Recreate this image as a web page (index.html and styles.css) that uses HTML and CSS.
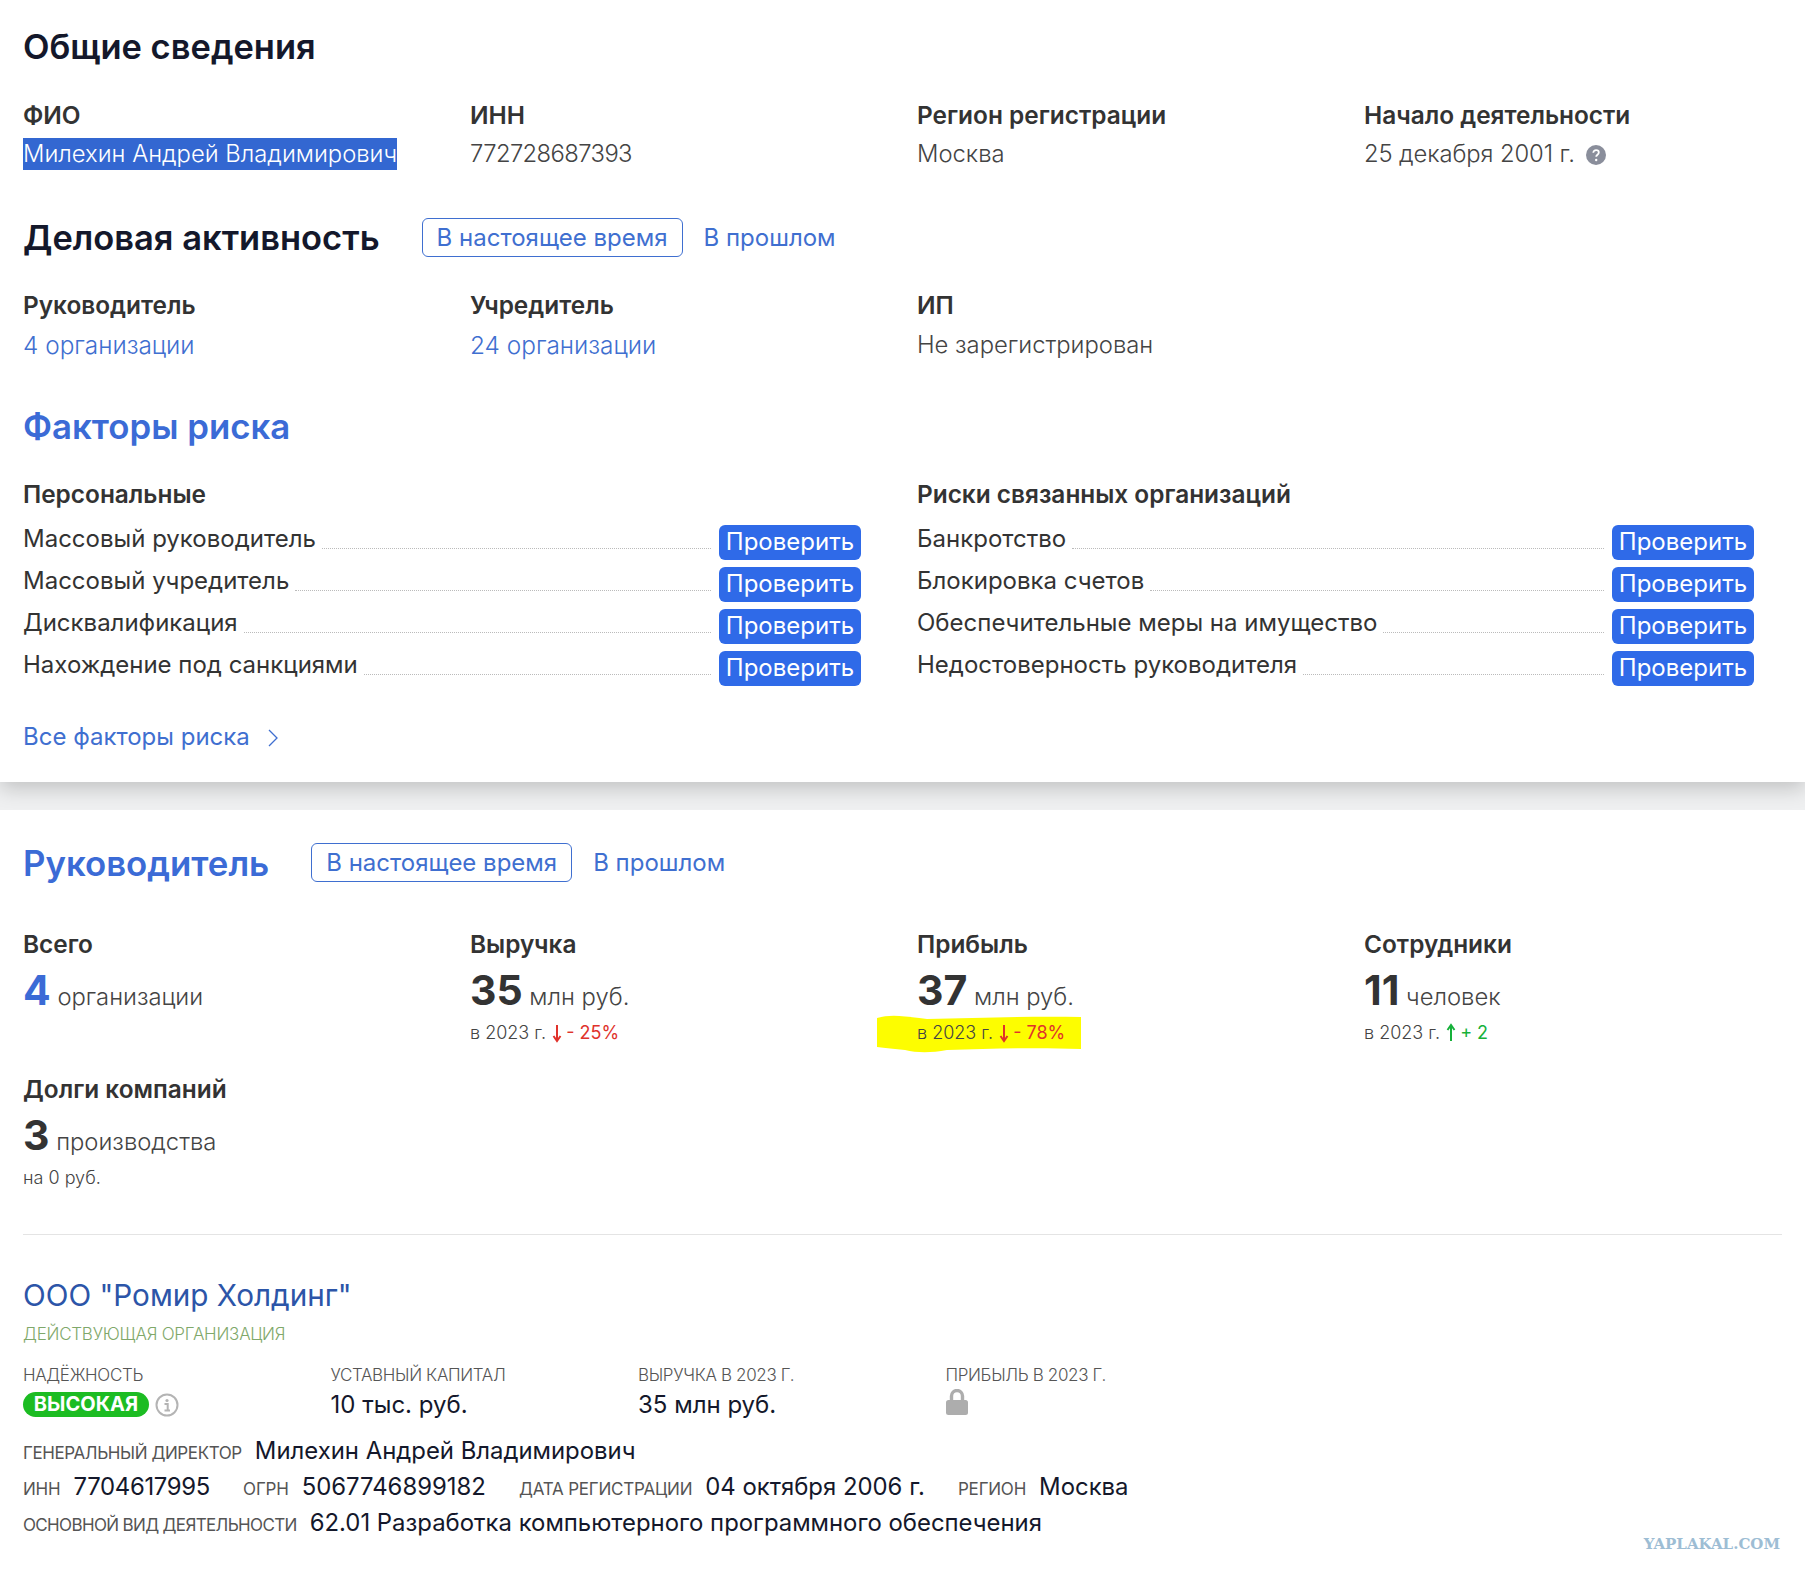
FILE: index.html
```html
<!DOCTYPE html>
<html lang="ru">
<head>
    <meta charset="UTF-8">
    <title>Милехин Андрей Владимирович</title>
    <link rel="stylesheet" href="styles.css">
</head>
<body>
    <section class="card card-top">
        <h2 class="title">Общие сведения</h2>
        <div class="info-grid first">
            <div><div class="label">ФИО</div><div class="value"><span class="selected">Милехин Андрей Владимирович</span></div></div>
            <div><div class="label">ИНН</div><div class="value digits">772728687393</div></div>
            <div><div class="label">Регион регистрации</div><div class="value">Москва</div></div>
            <div>
                <div class="label">Начало деятельности</div>
                <div class="value date">25 декабря 2001 г.
                    <svg class="help" width="20" height="20" viewBox="0 0 20 20"><circle cx="10" cy="10" r="10" fill="#8a8e9b"/><path d="M7.3 7.8c0-1.6 1.2-2.6 2.8-2.6s2.7 1 2.7 2.3c0 2.2-2.6 2.2-2.6 4.2" fill="none" stroke="#fff" stroke-width="1.8"/><circle cx="10.2" cy="15" r="1.2" fill="#fff"/></svg>
                </div>
            </div>
        </div>

        <div class="head-row activity">
            <h2 class="title">Деловая активность</h2>
            <a class="tab active">В настоящее время</a>
            <a class="tab">В прошлом</a>
        </div>
        <div class="info-grid second">
            <div><div class="label">Руководитель</div><div class="value link">4 организации</div></div>
            <div><div class="label">Учредитель</div><div class="value link">24 организации</div></div>
            <div><div class="label">ИП</div><div class="value">Не зарегистрирован</div></div>
        </div>

        <h2 class="title blue risk-title">Факторы риска</h2>
        <div class="risk-grid">
            <div>
                <div class="label">Персональные</div>
                <div class="risk-list">
                    <div class="risk-row"><span>Массовый руководитель</span><i></i><a class="check">Проверить</a></div>
                    <div class="risk-row"><span>Массовый учредитель</span><i></i><a class="check">Проверить</a></div>
                    <div class="risk-row"><span>Дисквалификация</span><i></i><a class="check">Проверить</a></div>
                    <div class="risk-row"><span>Нахождение под санкциями</span><i></i><a class="check">Проверить</a></div>
                </div>
            </div>
            <div>
                <div class="label">Риски связанных организаций</div>
                <div class="risk-list">
                    <div class="risk-row"><span>Банкротство</span><i></i><a class="check">Проверить</a></div>
                    <div class="risk-row"><span>Блокировка счетов</span><i></i><a class="check">Проверить</a></div>
                    <div class="risk-row"><span>Обеспечительные меры на имущество</span><i></i><a class="check">Проверить</a></div>
                    <div class="risk-row"><span>Недостоверность руководителя</span><i></i><a class="check">Проверить</a></div>
                </div>
            </div>
        </div>
        <a class="all-risks">Все факторы риска
            <svg width="12" height="20" viewBox="0 0 12 20"><path d="M2 2l8 8-8 8" fill="none" stroke="#3f6fd0" stroke-width="1.3"/></svg>
        </a>
    </section>

    <section class="card card-bottom">
        <div class="head-row">
            <h2 class="title blue">Руководитель</h2>
            <a class="tab active">В настоящее время</a>
            <a class="tab">В прошлом</a>
        </div>

        <div class="stat-grid">
            <div>
                <div class="label">Всего</div>
                <div class="stat"><b class="blue">4</b> организации</div>
            </div>
            <div>
                <div class="label">Выручка</div>
                <div class="stat"><b>35</b> млн руб.</div>
                <div class="sub">в 2023 г. <svg class="arrow" width="10" height="20" viewBox="0 0 10 20"><path d="M5 2v15M1.5 13L5 18l3.5-5" fill="none" stroke="#e0322b" stroke-width="2"/></svg> <em class="down">- 25%</em></div>
            </div>
            <div>
                <div class="label">Прибыль</div>
                <div class="stat"><b>37</b> млн руб.</div>
                <div class="sub marked">
                    <svg class="marker" width="204" height="40" viewBox="0 0 204 40"><path d="M0 5C14 1 26 3 50 6c50-1 100-3 154-2v32c-50-2-90 0-134 1-16 3-30 3-42 0-10-1-20-2-28-3z" fill="#fdfd00"/></svg>
                    в 2023 г. <svg class="arrow" width="10" height="20" viewBox="0 0 10 20"><path d="M5 2v15M1.5 13L5 18l3.5-5" fill="none" stroke="#e0322b" stroke-width="2"/></svg> <em class="down">- 78%</em>
                </div>
            </div>
            <div>
                <div class="label">Сотрудники</div>
                <div class="stat"><b>11</b> человек</div>
                <div class="sub">в 2023 г. <svg class="arrow" width="10" height="20" viewBox="0 0 10 20"><path d="M5 18V3M1.5 7L5 2l3.5 5" fill="none" stroke="#16b13a" stroke-width="2"/></svg> <em class="up">+ 2</em></div>
            </div>
            <div>
                <div class="label">Долги компаний</div>
                <div class="stat"><b>3</b> производства</div>
                <div class="sub">на 0 руб.</div>
            </div>
        </div>

        <hr class="divider">

        <a class="company-name">ООО "Ромир Холдинг"</a>
        <div class="company-status">ДЕЙСТВУЮЩАЯ ОРГАНИЗАЦИЯ</div>

        <div class="company-grid">
            <div>
                <div class="caption">НАДЁЖНОСТЬ</div>
                <div class="company-value">
                    <span class="badge">ВЫСОКАЯ</span>
                    <svg class="info" width="24" height="24" viewBox="0 0 24 24"><circle cx="12" cy="12" r="10.5" fill="none" stroke="#b4b4b4" stroke-width="2"/><circle cx="12" cy="7.5" r="1.6" fill="#b4b4b4"/><path d="M9.5 11h3.2v6M9.5 17.5h5.5" fill="none" stroke="#b4b4b4" stroke-width="2"/></svg>
                </div>
            </div>
            <div><div class="caption">УСТАВНЫЙ КАПИТАЛ</div><div class="company-value">10 тыс. руб.</div></div>
            <div><div class="caption">ВЫРУЧКА В 2023 Г.</div><div class="company-value">35 млн руб.</div></div>
            <div>
                <div class="caption">ПРИБЫЛЬ В 2023 Г.</div>
                <div class="company-value lock">
                    <svg width="22" height="26" viewBox="0 0 22 26"><path d="M5.5 13V7a5.5 5.5 0 0 1 11 0v6" fill="none" stroke="#adadad" stroke-width="3.4"/><rect y="11" width="22" height="15" rx="2.5" fill="#adadad"/></svg>
                </div>
            </div>
        </div>

        <div class="line"><span class="caption">ГЕНЕРАЛЬНЫЙ ДИРЕКТОР</span><span>Милехин Андрей Владимирович</span></div>
        <div class="line spaced">
            <span class="pair"><span class="caption">ИНН</span><span class="inn">7704617995</span></span>
            <span class="pair"><span class="caption">ОГРН</span><span>5067746899182</span></span>
            <span class="pair"><span class="caption">ДАТА РЕГИСТРАЦИИ</span><span>04 октября 2006 г.</span></span>
            <span class="pair"><span class="caption">РЕГИОН</span><span>Москва</span></span>
        </div>
        <div class="line"><span class="caption tight">ОСНОВНОЙ ВИД ДЕЯТЕЛЬНОСТИ</span><span>62.01 Разработка компьютерного программного обеспечения</span></div>
    </section>

    <div class="watermark">YAPLAKAL.COM</div>
</body>
</html>
```

FILE: styles.css
```css
body {
    margin: 0;
    height: 1573px;
    position: relative;
    overflow: hidden;
    background: #eff0f1;
    color: #333;
    font-family: "Inter", "Noto Sans", sans-serif;
    font-size: 24px;
    font-weight: 300;
}

.card {
    background: #fff;
    padding: 0 23px;
}

.card-top {
    position: relative;
    height: 782px;
    box-sizing: border-box;
    padding-top: 27px;
    box-shadow: 0 6px 20px rgba(0, 0, 0, 0.2);
}

.card-bottom {
    height: 763px;
    box-sizing: border-box;
    margin-top: 28px;
    padding-top: 33px;
}

.title {
    margin: 0;
    color: #14182b;
    font-size: 34.5px;
    font-weight: 600;
    line-height: 40px;
}

.title.blue {
    font-size: 34.8px;
}

.blue {
    color: #3b6bd6 !important;
}

.info-grid,
.stat-grid {
    display: grid;
    grid-template-columns: repeat(4, 447px);
}

.info-grid.first {
    margin-top: 31px;
}

.info-grid.second {
    margin-top: 31px;
}

.label {
    font-size: 24.4px;
    font-weight: 600;
    line-height: 34px;
    color: #333;
}

.value {
    margin-top: 3px;
    font-size: 23.8px;
    line-height: 38px;
    color: #444;
}

.value.digits {
    letter-spacing: -0.6px;
}

.value.date {
    letter-spacing: -0.1px;
}

.value.link {
    color: #3f6fd0;
    font-size: 24.4px;
}

.info-grid.second .value {
    margin-top: 4px;
}

.selected {
    display: inline-block;
    height: 32px;
    line-height: 32px;
    background: #3367d1;
    color: #fff;
}

.help {
    margin-left: 5px;
    vertical-align: -3px;
}

.head-row {
    display: flex;
    align-items: center;
    height: 39px;
}

.head-row.activity {
    margin-top: 45px;
}

.tab {
    margin-left: 21px;
    color: #3f6fd0;
    font-weight: 400;
    line-height: 37px;
}

.tab.active {
    margin-left: 42px;
    padding: 0 14px;
    border: 1px solid #3f6fd0;
    border-radius: 6px;
}

.risk-title {
    margin-top: 42px;
}

.risk-grid {
    display: grid;
    grid-template-columns: 838px 837px;
    column-gap: 56px;
    margin-top: 31px;
}

.risk-list {
    display: flex;
    flex-direction: column;
    gap: 7px;
    margin-top: 14px;
}

.risk-row {
    display: flex;
    height: 35px;
    line-height: 28px;
    font-weight: 400;
    color: #333;
}

.risk-row i {
    flex: 1;
    height: 23px;
    margin: 0 8px 0 6px;
    border-bottom: 1px dotted #bbb;
}

.check {
    width: 142px;
    height: 35px;
    line-height: 34px;
    text-align: center;
    background: #2f6ae8;
    border-radius: 6px;
    color: #fff;
    font-size: 24px;
    font-weight: 400;
}

.all-risks {
    display: block;
    margin-top: 32px;
    line-height: 38px;
    color: #3f6fd0;
    font-weight: 400;
}

.all-risks svg {
    margin-left: 10px;
    vertical-align: -3px;
}

.stat-grid {
    margin-top: 45px;
    row-gap: 25px;
}

.stat {
    margin-top: 6px;
    height: 46px;
    line-height: 46px;
    font-size: 23.8px;
    color: #444;
}

.stat b {
    font-size: 41px;
    font-weight: 700;
    color: #333;
}

.sub {
    margin-top: 6px;
    line-height: 28px;
    font-size: 18px;
    color: #444;
}

.sub em {
    font-style: normal;
    font-weight: 400;
}

.arrow {
    margin: 0 -1px 0 1px;
    vertical-align: -4px;
}

.down {
    color: #e0322b;
}

.up {
    color: #16b13a;
}

.marked {
    position: relative;
    isolation: isolate;
}

.marker {
    position: absolute;
    left: -40px;
    top: -6px;
    z-index: -1;
}

.divider {
    margin: 42px 0 0;
    border: 0;
    border-top: 1px solid #e4e4e4;
}

.company-name {
    display: block;
    margin-top: 40px;
    line-height: 40px;
    font-size: 29.7px;
    font-weight: 400;
    color: #2c55a8;
}

.company-status {
    margin-top: 7px;
    line-height: 24px;
    font-size: 17px;
    letter-spacing: -0.25px;
    color: #7fa86a;
}

.company-grid {
    display: grid;
    grid-template-columns: repeat(4, 307.5px);
    margin-top: 18px;
}

.caption {
    font-size: 17px;
    letter-spacing: -0.35px;
    line-height: 22px;
    color: #555;
}

.company-value {
    display: flex;
    align-items: center;
    gap: 6px;
    height: 30px;
    margin-top: 3px;
    font-size: 24px;
    font-weight: 400;
    color: #14182b;
}

.company-value.lock {
    align-items: flex-start;
}

.info {
    margin-top: 2px;
}

.badge {
    width: 126px;
    line-height: 25px;
    text-align: center;
    background: #1cbc22;
    border-radius: 13px;
    color: #fff;
    font-size: 20px;
    font-weight: 700;
}

.line {
    display: flex;
    align-items: baseline;
    gap: 13px;
    margin-top: 4px;
    line-height: 32px;
    font-size: 23.9px;
    font-weight: 400;
    color: #14182b;
}

.line .caption {
    letter-spacing: -0.4px;
}

.line .caption.tight {
    letter-spacing: -0.65px;
}

.company-grid + .line {
    margin-top: 16px;
}

.line.spaced {
    gap: 33px;
}

.line.spaced .caption {
    letter-spacing: -0.2px;
}

.pair {
    display: flex;
    align-items: baseline;
    gap: 13px;
}

.inn {
    letter-spacing: -0.3px;
}

.watermark {
    position: absolute;
    right: 25px;
    bottom: 20px;
    color: #9dbdd4;
    font-family: "DejaVu Serif", serif;
    font-size: 15px;
    font-weight: 700;
}
```
